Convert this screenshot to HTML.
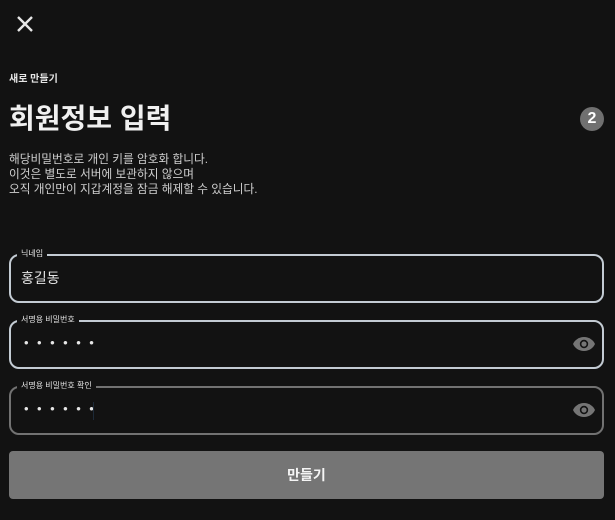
<!DOCTYPE html>
<html><head><meta charset="utf-8"><style>
*{margin:0;padding:0;box-sizing:border-box}
body{width:615px;height:520px;background:#121212;color:#e6e6e6;font-family:"Liberation Sans","Noto Sans CJK KR",sans-serif;position:relative;overflow:hidden}
.a{position:absolute}
.field{position:absolute;left:9px;width:595px;height:49px;border:2px solid #c3cbd3;border-radius:10px}
.field.g{border-color:#727272}
.lbl{position:absolute;top:-8px;left:6px;background:#121212;padding:0 4px;font-size:8px;color:#e6e6e6;line-height:12px}
.dots{position:absolute;left:13px;top:13px;font-size:13px;letter-spacing:8.5px;color:#e6e6e6}
.eye{position:absolute;right:6px;top:14px}
</style></head><body>
<svg class="a" style="left:16px;top:15px" width="18" height="18" viewBox="0 0 18 18"><path d="M2 2L16 16M16 2L2 16" stroke="#e6e6e6" stroke-width="2.4"/></svg>
<div class="a" style="left:9px;top:70px;font-size:10px;font-weight:bold">새로 만들기</div>
<div class="a" style="left:9px;top:101px;font-size:28px;font-weight:bold;line-height:36px;color:#f0f0f0">회원정보 입력</div>
<div class="a" style="left:580px;top:107px;width:24px;height:24px;border-radius:50%;background:#707070;color:#fff;font-weight:bold;font-size:16px;text-align:center;line-height:24px">2</div>
<div class="a" style="left:9px;top:152px;font-size:11.7px;line-height:15px;color:#cfcfcf">해당비밀번호로 개인 키를 암호화 합니다.<br>이것은 별도로 서버에 보관하지 않으며<br>오직 개인만이 지갑계정을 잠금 해제할 수 있습니다.</div>
<div class="field" style="top:254px"><div class="lbl">닉네임</div><div class="a" style="left:10px;top:12px;font-size:14px;color:#e6e6e6">홍길동</div></div>
<div class="field" style="top:320px"><div class="lbl">서명용 비밀번호</div><div class="dots">••••••</div>
<svg class="eye" width="24" height="16" viewBox="0 0 24 16"><path d="M12 1C6.5 1 2.5 4.5 1 8c1.5 3.5 5.5 7 11 7s9.5-3.5 11-7C21.5 4.5 17.5 1 12 1z" fill="#757575"/><circle cx="12" cy="8" r="4.2" fill="#121212"/><circle cx="12" cy="8" r="2.6" fill="#757575"/></svg></div>
<div class="field g" style="top:386px"><div class="lbl">서명용 비밀번호 확인</div><div class="dots">••••••</div><div class="a" style="left:82px;top:14px;width:1px;height:18px;background:#1d2a38"></div>
<svg class="eye" width="24" height="16" viewBox="0 0 24 16"><path d="M12 1C6.5 1 2.5 4.5 1 8c1.5 3.5 5.5 7 11 7s9.5-3.5 11-7C21.5 4.5 17.5 1 12 1z" fill="#757575"/><circle cx="12" cy="8" r="4.2" fill="#121212"/><circle cx="12" cy="8" r="2.6" fill="#757575"/></svg></div>
<div class="a" style="left:9px;top:451px;width:595px;height:48px;background:#757575;border-radius:4px;text-align:center;line-height:48px;font-size:14px;font-weight:bold;color:#f5f5f5">만들기</div>
</body></html>
